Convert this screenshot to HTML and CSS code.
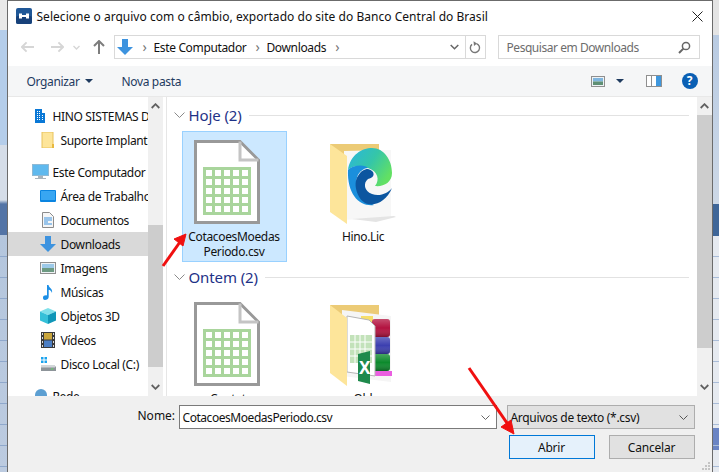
FILE: index.html
```html
<!DOCTYPE html>
<html lang="pt-BR">
<head>
  <meta charset="UTF-8">
  <meta name="viewport" content="width=device-width, initial-scale=1.0">
  <title>Selecione o arquivo</title>
  <link rel="stylesheet" href="styles.css">
</head>
<body>
  <svg class="defs" width="0" height="0">
    <defs>
      <pattern id="cells" x="3" y="30" width="9" height="9" patternUnits="userSpaceOnUse">
        <rect x="0" y="0" width="6" height="6" fill="#fff"/>
      </pattern>
      <linearGradient id="edgeTop" x1="0" y1="0" x2="1" y2="0.6">
        <stop offset="0" stop-color="#2ab5e0"/>
        <stop offset="0.55" stop-color="#35c6a8"/>
        <stop offset="1" stop-color="#62e063"/>
      </linearGradient>
      <linearGradient id="shine" x1="0" y1="0" x2="0" y2="1">
        <stop offset="0" stop-color="#fff" stop-opacity="0.25"/>
        <stop offset="0.5" stop-color="#fff" stop-opacity="0"/>
        <stop offset="1" stop-color="#000" stop-opacity="0.3"/>
      </linearGradient>
      <symbol id="sheet" viewBox="0 0 66 84">
        <path d="M1.500 1.500H46L64.500 20V82.500H1.500Z" fill="#fff" stroke="#999" stroke-width="3"/>
        <path d="M46 1.500V20H64.500" fill="none" stroke="#c4c4c4" stroke-width="3"/>
        <rect x="9" y="27" width="48" height="48" fill="#a9d59c"/>
        <rect x="9" y="27" width="48" height="48" fill="url(#cells)"/>
      </symbol>
    </defs>
  </svg>

  <div class="backdrop backdrop-left"></div>

  <div class="dialog">
    <div class="titlebar">
      <svg class="app-icon" width="16" height="16" viewBox="0 0 16 16">
        <rect width="16" height="16" rx="2" fill="#1f5797"/>
        <rect y="8" width="16" height="8" rx="2" fill="#17417a"/>
        <path d="M3 5.500h3v1.600h4V5.500h3v5h-3V8.900H6v1.600H3Z" fill="#fff"/>
      </svg>
      <span class="title">Selecione o arquivo com o câmbio, exportado do site do Banco Central do Brasil</span>
      <svg class="close" width="11" height="11" viewBox="0 0 11 11">
        <path d="M.5.5l10 10M10.500.5l-10 10" stroke="#222" stroke-width="1" fill="none"/>
      </svg>
    </div>

    <div class="addressrow">
      <div class="navbtns">
        <svg width="13" height="12" viewBox="0 0 14 12"><path d="M6 1L1 6l5 5M1 6h13" stroke="#d6d6d6" stroke-width="2" fill="none"/></svg>
        <svg class="forward" width="13" height="12" viewBox="0 0 14 12"><path d="M8 1l5 5-5 5M13 6H0" stroke="#d6d6d6" stroke-width="2" fill="none"/></svg>
        <svg class="recent" width="7" height="5" viewBox="0 0 7 5"><path d="M.5 1l3 3 3-3" stroke="#d6d6d6" stroke-width="1.400" fill="none"/></svg>
        <svg class="up" width="12" height="14" viewBox="0 0 12 14"><path d="M1 6l5-5 5 5M6 1v13" stroke="#7d7d7d" stroke-width="2" fill="none"/></svg>
      </div>
      <div class="addressbox">
        <svg class="crumb-icon" width="16" height="16" viewBox="0 0 16 16"><path d="M5 0h6v8h5l-8 8-8-8h5Z" fill="#3d93df"/></svg>
        <span class="sep">›</span>
        <span class="crumb">Este Computador</span>
        <span class="sep">›</span>
        <span class="crumb">Downloads</span>
        <span class="sep">›</span>
        <svg class="addr-chevron" width="9" height="6" viewBox="0 0 9 6"><path d="M.7 1l3.800 3.800L8.300 1" stroke="#666" stroke-width="1.500" fill="none"/></svg>
        <div class="refresh">
          <svg width="12" height="13" viewBox="0 0 12 13"><path d="M7.500 2.600A4.600 4.600 0 1 1 3 3.400" stroke="#777" stroke-width="1.400" fill="none"/><path d="M4.500 .2L8 2.600 5 5Z" fill="#777"/></svg>
        </div>
      </div>
      <div class="searchbox">
        <span>Pesquisar em Downloads</span>
        <svg width="13" height="13" viewBox="0 0 13 13"><circle cx="8" cy="5" r="3.600" stroke="#666" stroke-width="1.500" fill="none"/><path d="M5.400 7.600L1 12" stroke="#666" stroke-width="2"/></svg>
      </div>
    </div>

    <div class="toolbar">
      <span class="tool">Organizar</span>
      <span class="caret"></span>
      <span class="tool newfolder">Nova pasta</span>
      <svg class="view-icon" width="14" height="11" viewBox="0 0 14 11"><rect x=".5" y=".5" width="13" height="10" fill="#eef2f5" stroke="#8f8f8f"/><rect x="2" y="2" width="10" height="3.500" fill="#7fb5de"/><rect x="2" y="5.500" width="10" height="3.500" fill="#5f8f74"/></svg>
      <span class="caret view-caret"></span>
      <svg class="pane-icon" width="16" height="12" viewBox="0 0 16 12"><rect x=".5" y=".5" width="15" height="11" fill="#fff" stroke="#8f8f8f"/><rect x="10" y="1" width="5" height="10" fill="#3f97dd"/><path d="M5.500 1v10" stroke="#8f8f8f"/></svg>
      <span class="help">?</span>
    </div>

    <div class="panes">
      <div class="navpane">
        <div class="navrow lvl1">
          <svg width="17" height="16" viewBox="0 0 17 16"><path d="M3 1h7v4h3v10H3Z" fill="#0a78d6"/><path d="M5 3h1v1H5zM7 3h1v1H7zM5 5h1v1H5zM7 5h1v1H7zM5 7h1v1H5zM7 7h1v1H7zM5 9h1v1H5zM7 9h1v1H7zM5 11h1v1H5zM7 11h1v1H7zM10 7h1v1h-1zM10 9h1v1h-1zM10 11h1v1h-1z" fill="#fff"/></svg>
          <span>HINO SISTEMAS D</span>
        </div>
        <div class="navrow lvl2">
          <svg width="16" height="16" viewBox="0 0 16 16"><path d="M2 0h11v16H2Z" fill="#fde59a" stroke="#e8c25c"/><path d="M12 12h2v4h-2Z" fill="#e8b93f"/></svg>
          <span>Suporte Implant</span>
        </div>
        <div class="navrow lvl1 groupstart">
          <svg width="17" height="16" viewBox="0 0 17 16"><rect x=".5" y=".5" width="16" height="11" fill="#5fb9ee" stroke="#8fb9d4"/><path d="M6 12h5v2H6ZM3 14h11v1H3Z" fill="#a9b4bc"/></svg>
          <span>Este Computador</span>
        </div>
        <div class="navrow lvl2">
          <svg width="16" height="16" viewBox="0 0 16 16"><rect y="2" width="16" height="12" rx="1" fill="#0a84e0"/><rect x="1" y="3" width="14" height="9" fill="#38a6f2"/></svg>
          <span>Área de Trabalho</span>
        </div>
        <div class="navrow lvl2">
          <svg width="16" height="16" viewBox="0 0 16 16"><path d="M2.500.5h7l4 4v11h-11Z" fill="#f6f6f6" stroke="#8c8c8c"/><path d="M4 6h8M4 8h8M4 10h4M4 12h8" stroke="#3d93df"/></svg>
          <span>Documentos</span>
        </div>
        <div class="navrow lvl2 selected">
          <svg width="16" height="16" viewBox="0 0 16 16"><path d="M5 0h6v8h5l-8 8-8-8h5Z" fill="#3d93df"/></svg>
          <span>Downloads</span>
        </div>
        <div class="navrow lvl2">
          <svg width="16" height="16" viewBox="0 0 16 16"><rect x=".5" y="2.500" width="15" height="11" fill="#eef2f5" stroke="#8f8f8f"/><rect x="2" y="4" width="12" height="4" fill="#9cc9e8"/><rect x="2" y="8" width="12" height="4" fill="#6d9a82"/></svg>
          <span>Imagens</span>
        </div>
        <div class="navrow lvl2">
          <svg width="16" height="16" viewBox="0 0 16 16"><path d="M7 1h1.500c.5 3 4.500 3.500 3.500 8-.5-2-2-3-3.300-3.300V13c0 2-2 3-3.700 3S3 15 3 13.500 5 11 7 11.500Z" fill="#1c8fe6"/></svg>
          <span>Músicas</span>
        </div>
        <div class="navrow lvl2">
          <svg width="16" height="16" viewBox="0 0 16 16"><path d="M8 0l8 3.500L8 7 0 3.500Z" fill="#7fe0ea"/><path d="M0 3.500L8 7v9l-8-3.500Z" fill="#35c0d8"/><path d="M16 3.500L8 7v9l8-3.500Z" fill="#0f96b8"/></svg>
          <span>Objetos 3D</span>
        </div>
        <div class="navrow lvl2">
          <svg width="16" height="16" viewBox="0 0 16 16"><rect x="1" width="14" height="16" fill="#3a3a3a"/><rect x="4" y="1" width="8" height="6.500" fill="#c9a53c"/><rect x="4" y="8.500" width="8" height="6.500" fill="#4d7fc4"/><path d="M2 1h1v2H2zM2 5h1v2H2zM2 9h1v2H2zM2 13h1v2H2zM13 1h1v2h-1zM13 5h1v2h-1zM13 9h1v2h-1zM13 13h1v2h-1z" fill="#ddd"/></svg>
          <span>Vídeos</span>
        </div>
        <div class="navrow lvl2">
          <svg width="16" height="16" viewBox="0 0 16 16"><path d="M1 1h2.500v2.500H1zM4.500 1H7v2.500H4.500zM1 4.500h2.500V7H1zM4.500 4.500H7V7H4.500z" fill="#1aa3ee"/><path d="M2 9h12l2 2v4H1v-4Z" fill="#8d9499"/><rect x="1" y="9" width="14" height="2.500" fill="#d2d6d9"/><rect x="11" y="12.500" width="2" height="1" fill="#5ade5a"/></svg>
          <span>Disco Local (C:)</span>
        </div>
        <div class="navrow lvl1 groupstart">
          <svg width="17" height="16" viewBox="0 0 17 16"><circle cx="9" cy="7" r="6" fill="#5c9fd2"/><path d="M0 12h17v2H0Z" fill="#3d6f9e"/></svg>
          <span>Rede</span>
        </div>
      </div>

      <div class="scrollbar">
        <svg class="arrow" width="9" height="6" viewBox="0 0 9 6"><path d="M.7 5l3.800-3.800L8.300 5" stroke="#606060" stroke-width="1.800" fill="none"/></svg>
        <div class="track"><div class="thumb nav-thumb"></div></div>
        <svg class="arrow" width="9" height="6" viewBox="0 0 9 6"><path d="M.7 1l3.800 3.800L8.300 1" stroke="#606060" stroke-width="1.800" fill="none"/></svg>
      </div>

      <div class="files">
        <div class="group-head">
          <svg width="11" height="6" viewBox="0 0 11 6"><path d="M.5.5l5 5 5-5" stroke="#8a8a8a" fill="none"/></svg>
          <span class="group-name">Hoje (2)</span>
          <span class="group-line"></span>
        </div>
        <div class="tiles">
          <div class="tile selected-tile">
            <svg class="big sheet-icon" width="66" height="84"><use href="#sheet"/></svg>
            <span class="tile-name">CotacoesMoedas Periodo.csv</span>
          </div>
          <div class="tile">
            <svg class="big" width="66" height="84" viewBox="0 0 66 84">
              <path d="M0 4h49v12H0Z" fill="#eccb76"/>
              <path d="M14 11l47-1v67l-47 3Z" fill="#f7f7f7"/>
              <path d="M22 79l42-3 2 1-20 5Z" fill="#e4e4e4"/>
              <path d="M0 4l17 12v68L0 72Z" fill="#fde59a"/>
              <path d="M18 30C20 15 32 8 42 8c12 0 20 12 20 25 0 10-9 14-17 13 5-6 3-15-7-18-8-2-15-3-20 2Z" fill="url(#edgeTop)"/>
              <path d="M18 30c6-6 18-5 20-2-10 1-15 13-9 24 3 6 9 10 15 13-14 2-27-10-26-35Z" fill="#1b8fdc"/>
              <path d="M38 29c8 2 7 9 0 10-5 4-4 12 4 15 8 3 16-1 20-6-5 12-15 18-24 16-10-2-16-20-10-28 3-5 6-7 10-7Z" fill="#0c56a0"/>
            </svg>
            <span class="tile-name">Hino.Lic</span>
          </div>
        </div>
        <div class="group-head second">
          <svg width="11" height="6" viewBox="0 0 11 6"><path d="M.5.5l5 5 5-5" stroke="#8a8a8a" fill="none"/></svg>
          <span class="group-name">Ontem (2)</span>
          <span class="group-line"></span>
        </div>
        <div class="tiles">
          <div class="tile">
            <svg class="big sheet-icon" width="66" height="84"><use href="#sheet"/></svg>
            <span class="tile-name">Contatos</span>
          </div>
          <div class="tile">
            <svg class="big" width="66" height="84" viewBox="0 0 66 84">
              <path d="M0 3h49v12H0Z" fill="#eccb76"/>
              <path d="M12 8l49 6v66l-49-6Z" fill="#f5f5f5"/>
              <path d="M31 14h12v8H31Z" fill="#f6de6a"/>
              <rect x="42" y="17" width="18" height="18" rx="3" fill="#b3123f"/>
              <rect x="42" y="35" width="18" height="17" rx="3" fill="#3c3fb0"/>
              <rect x="42" y="52" width="18" height="17" rx="3" fill="#0c8a2c"/>
              <rect x="42" y="17" width="18" height="18" rx="3" fill="url(#shine)"/>
              <rect x="42" y="35" width="18" height="17" rx="3" fill="url(#shine)"/>
              <rect x="42" y="52" width="18" height="17" rx="3" fill="url(#shine)"/>
              <path d="M42 69h20v5H42Z" fill="#ea5ee0"/>
              <path d="M17 14l22 4 6 6v50l-28-4Z" fill="#fff" stroke="#b5b5b5"/>
              <path d="M20 33h22v28H20Z" fill="#c3e2ba"/>
              <path d="M25 33v28M30 33v28M35 33v28M20 40h22M20 47h22M20 54h22" stroke="#fff"/>
              <path d="M0 3l17 13v68L0 71Z" fill="#fde59a"/>
              <path d="M28 52l12-3v33l-12-3Z" fill="#1f8a4c"/>
              <text class="xl" x="29" y="72">X</text>
            </svg>
            <span class="tile-name">Old</span>
          </div>
        </div>
      </div>

      <div class="scrollbar right-scroll">
        <svg class="arrow" width="9" height="6" viewBox="0 0 9 6"><path d="M.7 5l3.800-3.800L8.300 5" stroke="#606060" stroke-width="1.800" fill="none"/></svg>
        <div class="track"><div class="thumb files-thumb"></div></div>
        <svg class="arrow" width="9" height="6" viewBox="0 0 9 6"><path d="M.7 1l3.800 3.800L8.300 1" stroke="#606060" stroke-width="1.800" fill="none"/></svg>
      </div>
    </div>

    <div class="footer">
      <div class="namerow">
        <span class="namelabel">Nome:</span>
        <div class="nameinput">
          <span>CotacoesMoedasPeriodo.csv</span>
          <svg width="9" height="5" viewBox="0 0 9 5"><path d="M.5.5l4 4 4-4" stroke="#666" fill="none"/></svg>
        </div>
        <div class="filter">
          <span>Arquivos de texto (*.csv)</span>
          <svg width="9" height="5" viewBox="0 0 9 5"><path d="M.5.5l4 4 4-4" stroke="#555" fill="none"/></svg>
        </div>
      </div>
      <div class="buttonrow">
        <button class="btn btn-default">Abrir</button>
        <button class="btn">Cancelar</button>
      </div>
      <svg class="grip" width="8" height="8" viewBox="0 0 8 8"><path d="M6 0h2v2H6zM3 3h2v2H3zM6 3h2v2H6zM0 6h2v2H0zM3 6h2v2H3zM6 6h2v2H6z" fill="#c4c4c4"/></svg>
    </div>
  </div>

  <div class="backdrop backdrop-right"></div>

  <svg class="arrows" width="719" height="472" viewBox="0 0 719 472">
    <path d="M163 266L180 242" stroke="#f01010" stroke-width="3" fill="none"/>
    <path d="M186 234L183 246 174 239Z" fill="#f01010" stroke="#f01010"/>
    <path d="M469 368L509 426" stroke="#f01010" stroke-width="3" fill="none"/>
    <path d="M514 434L501 427 511 420Z" fill="#f01010" stroke="#f01010"/>
  </svg>
</body>
</html>
```

FILE: styles.css
```css
* {
  box-sizing: border-box;
}
html, body {
  height: 100%;
}
body {
  margin: 0;
  width: 719px;
  height: 472px;
  overflow: hidden;
  display: flex;
  font-family: "Noto Sans", sans-serif;
  font-size: 12px;
  letter-spacing: -0.35px;
  color: #111;
}
.defs {
  position: absolute;
}
svg {
  flex: none;
  display: block;
}
.backdrop {
  flex: 1;
}
.backdrop-left {
  background:
    repeating-linear-gradient(transparent 0, transparent 20px, #8fa8cc 20px, #8fa8cc 21px) 0 236px / 100% 236px no-repeat,
    linear-gradient(#e9e9e9 0, #e9e9e9 30px, #b4cdea 30px, #b4cdea 145px, #d5dde8 145px, #d5dde8 200px, #5374a6 204px, #5374a6 235px, #b4c6dd 235px, #bccbe0 472px);
}
.backdrop-right {
  background:
    repeating-linear-gradient(transparent 0, transparent 20px, #a9bcd8 20px, #a9bcd8 21px) 0 236px / 100% 236px no-repeat,
    linear-gradient(#e4e4e4 0, #e4e4e4 35px, #b9cbe2 35px, #c6d4e6 145px, #cdd8e6 204px, #3f6698 204px, #3f6698 236px, #e6eaf0 236px, #e6eaf0 428px, #6a84c4 428px, #6a84c4 450px, #e6eaf0 450px);
}
.dialog {
  flex: none;
  width: 706px;
  height: 472px;
  background: #fff;
  border: 1px solid #6b6b6b;
  border-bottom: none;
  display: flex;
  flex-direction: column;
}
.titlebar {
  height: 34px;
  padding: 0 9px 4px 8px;
  display: flex;
  align-items: center;
}
.title {
  margin-left: 5px;
  font-size: 12px;
  letter-spacing: 0.03px;
  white-space: nowrap;
}
.close {
  margin-left: auto;
}
.addressrow {
  height: 31px;
  display: flex;
  padding-bottom: 7px;
}
.navbtns {
  width: 106px;
  padding-left: 13px;
  display: flex;
  align-items: center;
}
.navbtns .forward {
  margin-left: 17px;
}
.navbtns .recent {
  margin-left: 9px;
}
.navbtns .up {
  margin-left: 13px;
}
.addressbox {
  width: 372px;
  border: 1px solid #d9d9d9;
  display: flex;
  align-items: center;
  padding-left: 2px;
}
.crumb-icon {
  margin-right: 6px;
}
.sep {
  color: #777;
  font-size: 14px;
  margin: 0 7px 2px 4px;
}
.crumb {
  margin-right: 5px;
}
.addr-chevron {
  margin-left: auto;
  margin-right: 6px;
}
.refresh {
  width: 20px;
  height: 100%;
  border-left: 1px solid #d9d9d9;
  display: flex;
  align-items: center;
  justify-content: center;
}
.searchbox {
  width: 202px;
  margin-left: 12px;
  border: 1px solid #d9d9d9;
  padding: 0 8px;
  letter-spacing: -0.45px;
  color: #6d6d6d;
  display: flex;
  align-items: center;
  justify-content: space-between;
}
.toolbar {
  height: 31px;
  background: #f5f6f7;
  border-bottom: 1px solid #e8e8e8;
  padding-left: 19px;
  display: flex;
  align-items: center;
  color: #1e3a5f;
}
.caret {
  width: 0;
  height: 0;
  margin-left: 5px;
  border-left: 4px solid transparent;
  border-right: 4px solid transparent;
  border-top: 4px solid #1e3a5f;
}
.newfolder {
  margin-left: 29px;
}
.view-icon {
  margin-left: auto;
}
.view-caret {
  margin-left: 11px;
}
.pane-icon {
  margin-left: 22px;
}
.help {
  width: 16px;
  height: 16px;
  margin: 0 14px 0 20px;
  border-radius: 50%;
  background: #0a5fb4;
  color: #fff;
  font-weight: 700;
  font-size: 12px;
  line-height: 16px;
  text-align: center;
}
.panes {
  height: 299px;
  display: flex;
  overflow: hidden;
}
.navpane {
  width: 140px;
  padding-top: 7px;
  overflow: hidden;
  flex: none;
}
.navrow {
  height: 24px;
  display: flex;
  align-items: center;
  white-space: nowrap;
}
.navrow svg {
  margin-right: 5px;
}
.lvl1 {
  padding-left: 24px;
}
.lvl1 svg {
  margin-right: 4px;
}
.lvl2 {
  padding-left: 32px;
}
.groupstart {
  margin-top: 8px;
}
.selected {
  background: #d9d9d9;
}
.scrollbar {
  width: 15px;
  background: #f0f0f0;
  flex: none;
  display: flex;
  flex-direction: column;
  align-items: center;
}
.scrollbar .arrow {
  margin: 6px 0;
}
.track {
  flex: 1;
  width: 100%;
}
.thumb {
  width: 100%;
  background: #cdcdcd;
}
.nav-thumb {
  margin-top: 110px;
  height: 142px;
}
.files-thumb {
  height: 233px;
}
.files {
  flex: 1;
  margin-left: 3px;
  border-left: 1px solid #e6e6e6;
  overflow: hidden;
  padding: 8px 8px 0 7px;
}
.group-head {
  height: 20px;
  display: flex;
  align-items: center;
}
.group-head.second {
  margin-top: 5px;
}
.group-name {
  margin-left: 4px;
  margin-right: 7px;
  font-size: 15px;
  letter-spacing: -0.1px;
  color: #1e3287;
  white-space: nowrap;
}
.group-line {
  flex: 1;
  height: 1px;
  background: #e2e2e2;
}
.tiles {
  display: flex;
  gap: 24px;
  margin-top: 6px;
  padding-left: 8px;
}
.tile {
  width: 105px;
  height: 131px;
  padding-top: 8px;
  display: flex;
  flex-direction: column;
  align-items: center;
  border: 1px solid transparent;
  text-align: center;
  line-height: 15px;
}
.sheet-icon {
  margin-right: 14px;
}
.selected-tile {
  background: #cce8ff;
  border-color: #99d1ff;
}
.tile-name {
  margin-top: 5px;
  padding: 0 8px;
}
.xl {
  font-family: "Noto Sans", sans-serif;
  font-size: 17px;
  font-weight: 700;
  fill: #fff;
}
.footer {
  flex: 1;
  background: #f0f0f0;
  padding: 9px 16px 0 0;
  display: flex;
  flex-direction: column;
  position: relative;
}
.namerow {
  display: flex;
  align-items: center;
  height: 24px;
}
.namelabel {
  margin-left: 130px;
  width: 41px;
  margin-bottom: 3px;
  letter-spacing: 0;
}
.nameinput {
  width: 318px;
  height: 24px;
  background: #fff;
  border: 1px solid #7a7a7a;
  padding: 0 6px 0 3px;
  letter-spacing: -0.45px;
  display: flex;
  align-items: center;
  justify-content: space-between;
}
.filter {
  width: 188px;
  height: 24px;
  margin-left: 10px;
  background: #e1e1e1;
  border: 1px solid #adadad;
  padding: 0 6px 0 3px;
  letter-spacing: -0.3px;
  display: flex;
  align-items: center;
  justify-content: space-between;
}
.buttonrow {
  margin-top: 6px;
  display: flex;
  justify-content: flex-end;
  gap: 14px;
  padding-right: 1px;
}
.btn {
  width: 86px;
  height: 24px;
  padding: 0;
  background: #e1e1e1;
  border: 1px solid #adadad;
  font-family: inherit;
  font-size: 12px;
  letter-spacing: -0.2px;
  color: #111;
}
.btn-default {
  background: #e5f1fb;
  border-color: #0078d7;
}
.grip {
  position: absolute;
  right: 2px;
  bottom: 2px;
}
.arrows {
  position: absolute;
  left: 0;
  top: 0;
}
```
